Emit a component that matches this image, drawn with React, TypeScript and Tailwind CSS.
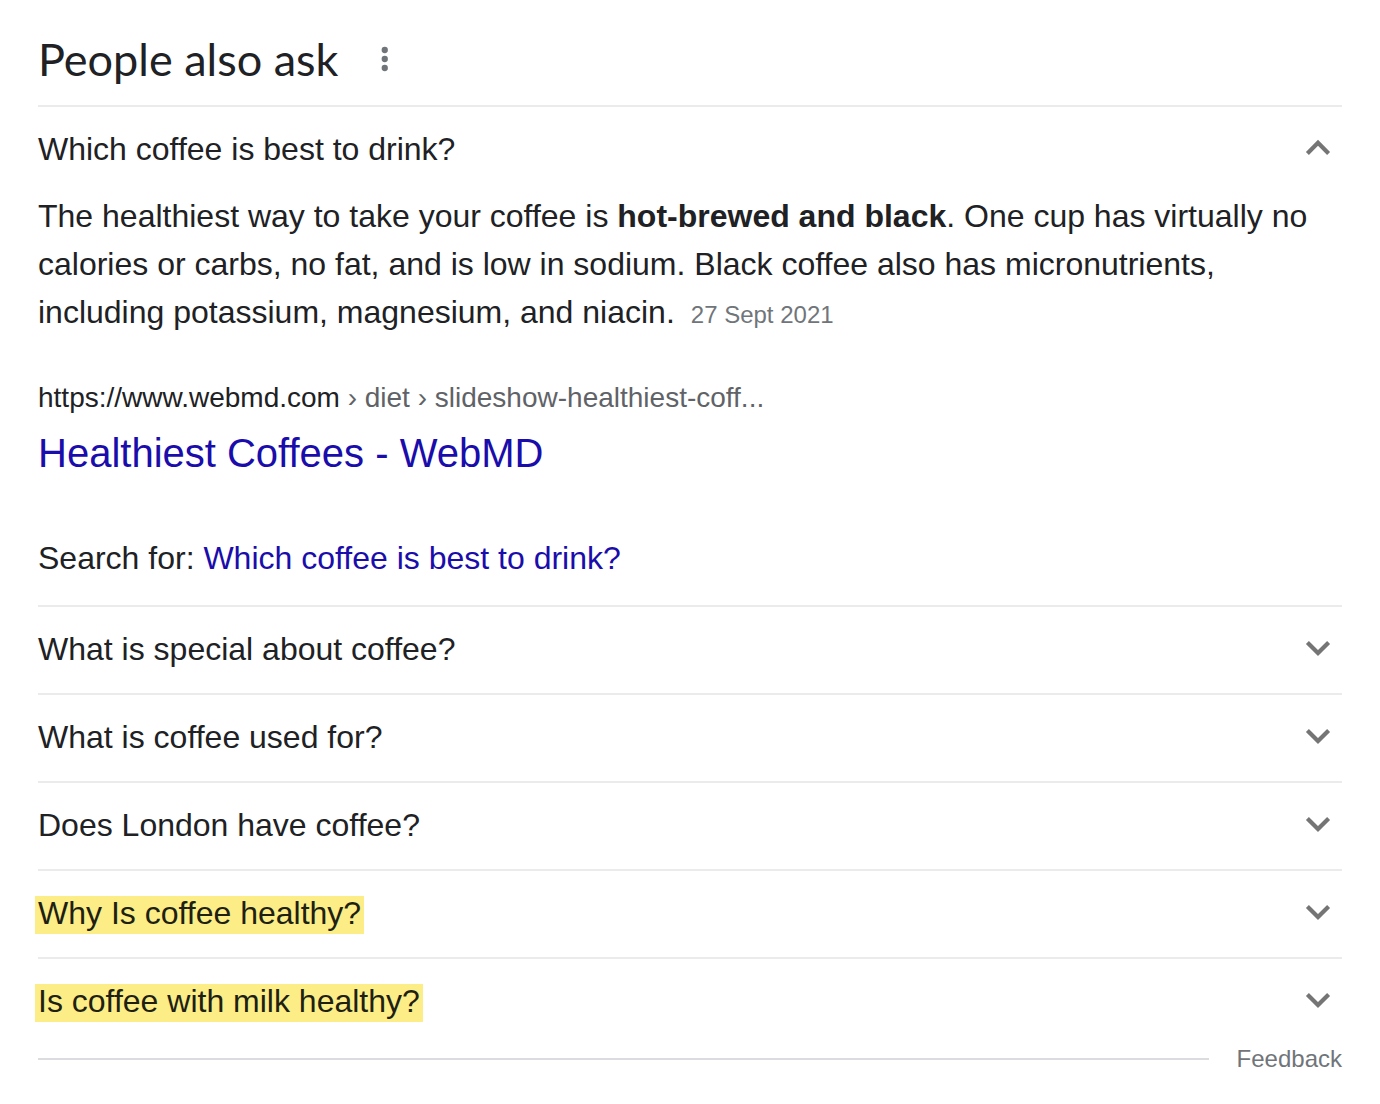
import { useState } from "react";

const answer = {
  date: "27 Sept 2021",
  site: "https://www.webmd.com",
  path: " › diet › slideshow-healthiest-coff...",
  title: "Healthiest Coffees - WebMD",
};

const questions = [
  { text: "Which coffee is best to drink?", highlighted: false },
  { text: "What is special about coffee?", highlighted: false },
  { text: "What is coffee used for?", highlighted: false },
  { text: "Does London have coffee?", highlighted: false },
  { text: "Why Is coffee healthy?", highlighted: true },
  { text: "Is coffee with milk healthy?", highlighted: true },
];

function Chevron({ open }: { open: boolean }) {
  return (
    <svg
      viewBox="0 0 48 48"
      className="size-12 shrink-0 fill-none stroke-[#757575]"
      strokeWidth="4.2"
      aria-hidden="true"
    >
      <path d={open ? "M13.4 28.4 24 17.8l10.6 10.6" : "M13.4 17.4 24 28l10.6-10.6"} />
    </svg>
  );
}

function Answer({ question }: { question: string }) {
  return (
    <div className="pb-[23px]">
      <p className="text-[32px] leading-12">
        The healthiest way to take your coffee is <b>hot-brewed and black</b>.
        One cup has virtually no calories or carbs, no fat, and is low in
        sodium. Black coffee also has micronutrients, including potassium,
        magnesium, and niacin.
        <span className="ml-4 text-2xl text-[#70757a]">{answer.date}</span>
      </p>

      {/* Source */}
      <a href="#source" className="mt-[43px] block">
        <cite className="block text-[28px] leading-[38px] not-italic">
          {answer.site}
          <span className="text-[#5f6368]">{answer.path}</span>
        </cite>
        <h3 className="mt-2 text-[40px] leading-14 text-[#1a0dab]">
          {answer.title}
        </h3>
      </a>

      <p className="mt-[53px] text-[32px] leading-12">
        Search for:{" "}
        <a href="#search" className="text-[#1a0dab]">
          {question}
        </a>
      </p>
    </div>
  );
}

export default function App() {
  const [openIndex, setOpenIndex] = useState(0);

  return (
    <main className="bg-white px-[38px] pt-[31px] font-['Liberation_Sans',Arial,sans-serif] text-[#202124]">
      {/* Header */}
      <div className="flex items-center gap-7 pb-[18px]">
        <h2 className="font-[Lato,sans-serif] text-[45px] leading-14">
          People also ask
        </h2>
        <button type="button" aria-label="About this result">
          <svg viewBox="0 0 24 24" className="size-9 fill-[#70757a]">
            <circle cx="12.5" cy="6" r="2.1" />
            <circle cx="12.5" cy="12" r="2.1" />
            <circle cx="12.5" cy="18" r="2.1" />
          </svg>
        </button>
      </div>

      {/* Questions */}
      {questions.map((question, index) => {
        const open = index === openIndex;
        return (
          <section key={question.text} className="border-t-2 border-[#ebebeb]">
            <button
              type="button"
              aria-expanded={open}
              onClick={() => setOpenIndex(open ? -1 : index)}
              className={`flex w-full items-center justify-between text-left text-[32px] leading-11 ${
                open ? "h-[85px] pb-px" : "h-[86px] pb-0.5"
              }`}
            >
              <span>
                {question.highlighted ? (
                  <mark className="-mx-[3px] inline-block bg-[#fded86] px-[3px] pb-1 leading-[34px] text-[#201f13]">
                    {question.text}
                  </mark>
                ) : (
                  question.text
                )}
              </span>
              <Chevron open={open} />
            </button>
            {open && <Answer question={question.text} />}
          </section>
        );
      })}

      {/* Footer */}
      <div className="flex items-center gap-7">
        <hr className="flex-1 border-t-2 border-[#dadce0]" />
        <a href="#feedback" className="text-2xl leading-7 text-[#70757a]">
          Feedback
        </a>
      </div>
    </main>
  );
}
